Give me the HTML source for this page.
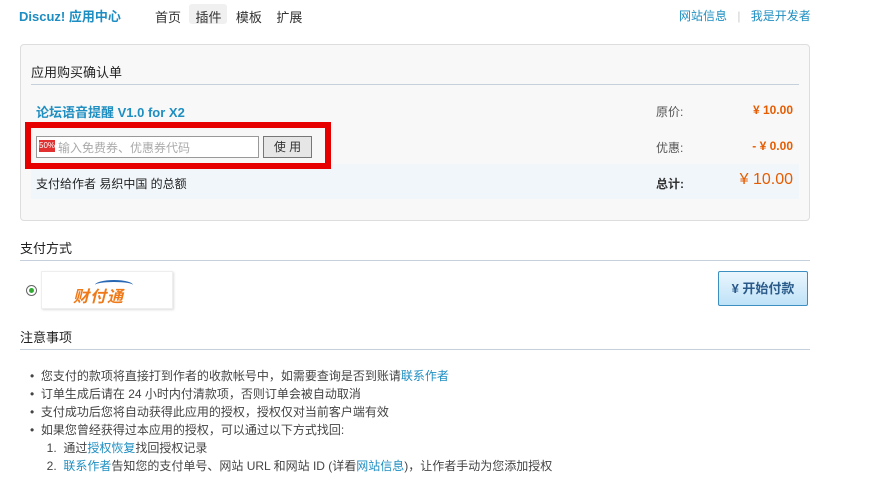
<!DOCTYPE html>
<html><head><meta charset="utf-8"><style>
body{margin:0;background:#fff;font-family:"Liberation Sans","Noto Sans CJK SC",sans-serif;font-size:12px;color:#333;width:875px;height:490px;overflow:hidden;position:relative}
.a{position:absolute;white-space:nowrap}
.blue{color:#1f8ec1}
.org{color:#e65c00;font-weight:bold}
</style></head><body>
<div class="a" style="left:19px;top:6px;font-size:13px;font-weight:bold;color:#1d8dc2">Discuz! 应用中心</div>
<div class="a" style="left:189px;top:4px;width:38px;height:20px;background:#f0f0f0;border-radius:3px"></div>
<div class="a" style="left:155px;top:7px;font-size:13px;color:#333;word-spacing:0">首页&nbsp;&nbsp;&nbsp;&nbsp;插件&nbsp;&nbsp;&nbsp;&nbsp;模板&nbsp;&nbsp;&nbsp;&nbsp;扩展</div>
<div class="a blue" style="left:679px;top:7px;font-size:12px">网站信息 <span style="color:#ccc;margin:0 7px">|</span> 我是开发者</div>

<div class="a" style="left:20px;top:44px;width:788px;height:175px;border:1px solid #ddd;border-radius:4px;background:#f8f8f8"></div>
<div class="a" style="left:31px;top:62px;font-size:13px;color:#222">应用购买确认单</div>
<div class="a" style="left:31px;top:84px;width:768px;height:1px;background:#c5d0dc"></div>
<div class="a" style="left:36px;top:102px;font-size:13px;font-weight:bold;color:#1f8ec1">论坛语音提醒 V1.0 for X2</div>
<div class="a" style="left:656px;top:103px;color:#555">原价:</div>
<div class="a org" style="right:82px;top:103px">¥ 10.00</div>
<div class="a" style="left:656px;top:139px;color:#555">优惠:</div>
<div class="a org" style="right:82px;top:139px">- ¥ 0.00</div>
<div class="a" style="left:31px;top:164px;width:768px;height:35px;background:#f1f6fa"></div>
<div class="a" style="left:36px;top:175px;color:#222">支付给作者 易织中国 的总额</div>
<div class="a" style="left:656px;top:175px;color:#333;font-weight:bold">总计:</div>
<div class="a" style="right:82px;top:171px;color:#e65c00;font-size:16px">¥ 10.00</div>

<div class="a" style="left:25px;top:122px;width:294px;height:35px;border:6px solid #e60000;background:#f7f7f7"></div>
<div class="a" style="left:36px;top:136px;width:221px;height:20px;border:1px solid #999;background:#fff"></div>
<div class="a" style="left:39px;top:140px;width:16px;height:12px;background:#e03030;color:#fff;font-size:8px;line-height:12px;text-align:center">50%</div>
<div class="a" style="left:58px;top:139px;color:#aaa">输入免费券、优惠券代码</div>
<div class="a" style="left:263px;top:136px;width:47px;height:20px;border:1px solid #777;background:#e6e6e6;text-align:center;line-height:20px">使 用</div>

<div class="a" style="left:20px;top:238px;font-size:13px;color:#222">支付方式</div>
<div class="a" style="left:20px;top:260px;width:790px;height:1px;background:#c5d0dc"></div>
<div class="a" style="left:26px;top:285px;width:9px;height:9px;border:1px solid #666;border-radius:50%;background:#fff"></div>
<div class="a" style="left:29px;top:288px;width:5px;height:5px;border-radius:50%;background:#3a3"></div>
<div class="a" style="left:41px;top:271px;width:130px;height:36px;background:#fff;box-shadow:1px 1px 2px #ddd;border:1px solid #eee"></div>
<div class="a" style="left:73px;top:283px;font-size:16px;font-weight:bold;font-style:italic;color:#ef7a1a;letter-spacing:1px">财付通</div>
<div class="a" style="left:95px;top:280px;width:38px;height:8px;border-top:2px solid #2767b3;border-radius:50% 50% 0 0"></div>
<div class="a" style="left:718px;top:271px;width:88px;height:33px;border:1px solid #3d8ec1;border-radius:2px;background:linear-gradient(#eaf6fd,#bfe2f8);text-align:center;line-height:33px;font-size:13px;font-weight:bold;color:#2a5a8a">¥ 开始付款</div>

<div class="a" style="left:20px;top:327px;font-size:13px;color:#222">注意事项</div>
<div class="a" style="left:20px;top:349px;width:790px;height:1px;background:#c5d0dc"></div>
<div class="a" style="left:30px;top:367px;line-height:18px;color:#444">
• &nbsp;您支付的款项将直接打到作者的收款帐号中，如需要查询是否到账请<span class="blue">联系作者</span><br>
• &nbsp;订单生成后请在 24 小时内付清款项，否则订单会被自动取消<br>
• &nbsp;支付成功后您将自动获得此应用的授权，授权仅对当前客户端有效<br>
• &nbsp;如果您曾经获得过本应用的授权，可以通过以下方式找回:<br>
&nbsp;&nbsp;&nbsp;&nbsp;&nbsp;1. &nbsp;通过<span class="blue">授权恢复</span>找回授权记录<br>
&nbsp;&nbsp;&nbsp;&nbsp;&nbsp;2. &nbsp;<span class="blue">联系作者</span>告知您的支付单号、网站 URL 和网站 ID (详看<span class="blue">网站信息</span>)，让作者手动为您添加授权
</div>
</body></html>
